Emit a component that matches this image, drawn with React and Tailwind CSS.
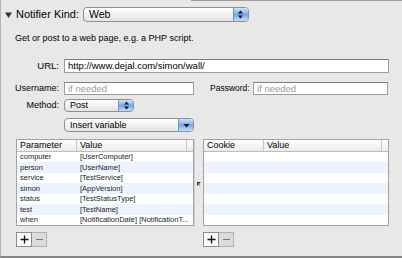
import React from "react";

const font = { fontFamily: '"Liberation Sans", Arial, sans-serif' };

const params = [
  ["computer", "[UserComputer]"],
  ["person", "[UserName]"],
  ["service", "[TestService]"],
  ["simon", "[AppVersion]"],
  ["status", "[TestStatusType]"],
  ["test", "[TestName]"],
  ["when", "[NotificationDate] [NotificationT..."],
];

const Arrows = ({ pulldown }) => (
  <span className="w-[15px] h-full flex items-center justify-center border-l border-[#6f93c4] bg-gradient-to-b from-[#d3e5fb] via-[#6ea8ee] to-[#c4defb]">
    {pulldown ? (
      <svg width="7" height="5" viewBox="0 0 7 5">
        <path d="M0.5 1h6L3.5 4.5z" fill="#111" />
      </svg>
    ) : (
      <svg width="5" height="9" viewBox="0 0 5 9">
        <path d="M2.5 0.5L5 3.5H0z" fill="#111" />
        <path d="M2.5 8.5L5 5.5H0z" fill="#111" />
      </svg>
    )}
  </span>
);

const Field = ({ value, placeholder, className }) => (
  <div className={`${className} bg-white border border-[#9c9c9c] border-t-[#7d7d7d] flex items-center pl-[3px] text-[9.5px] leading-none`}>
    {value ? <span className="text-black">{value}</span> : <span className="text-[#9a9a9a]">{placeholder}</span>}
  </div>
);

const Table = ({ width, col1, col1w, rows }) => (
  <div className={`${width} h-[87px] bg-white border border-[#a3a3a3] flex flex-col overflow-hidden`}>
    <div className="h-[12px] flex text-[9px] leading-none bg-gradient-to-b from-white to-[#ececec] border-b border-[#bdbdbd]">
      <div className={`${col1w} pl-[3px] flex items-center border-r border-[#c8c8c8]`}>{col1}</div>
      <div className="flex-1 pl-[3px] flex items-center border-r border-[#c8c8c8] mr-[6px]">Value</div>
    </div>
    {Array.from({ length: 7 }).map((_, i) => (
      <div key={i} className={`h-[10.5px] flex items-center text-[7.5px] leading-none text-[#1c1c1c] ${i % 2 ? "bg-[#edf3fe]" : "bg-white"}`}>
        {rows && rows[i] ? (
          <>
            <div className={`${col1w} pl-[3px] whitespace-nowrap`}>{rows[i][0]}</div>
            <div className="flex-1 pl-[3px] whitespace-nowrap">{rows[i][1]}</div>
          </>
        ) : null}
      </div>
    ))}
  </div>
);

const PlusMinus = () => (
  <div className="flex h-[15px] mt-[6px]">
    <div className="w-[16px] h-full bg-[#fafafa] border border-[#8c8c8c] flex items-center justify-center">
      <svg width="9" height="9" viewBox="0 0 9 9">
        <path d="M4.5 0.5v8M0.5 4.5h8" stroke="#111" strokeWidth="1.3" />
      </svg>
    </div>
    <div className="w-[15px] h-full bg-[#dcdcdc] border border-l-0 border-[#b0b0b0] flex items-center justify-center">
      <svg width="7" height="3" viewBox="0 0 7 3">
        <path d="M0 1.5h7" stroke="#777" strokeWidth="1" />
      </svg>
    </div>
  </div>
);

export default function App() {
  return (
    <div style={font} className="w-[402px] h-[258px] bg-[#e8e8e8] border-l border-[#b4b4b4] border-b-2 border-b-[#858585] flex flex-col overflow-hidden text-black">
      <div className="h-px ml-[190px] bg-[#9c9c9c]" />

      {/* Notifier kind */}
      <div className="flex items-center h-[15px] mt-[6px] pl-[4px]">
        <svg width="7" height="6" viewBox="0 0 7 6" className="mr-[4px]">
          <path d="M0 0.5h7L3.5 6z" fill="#333" />
        </svg>
        <span className="text-[11px] leading-none">Notifier Kind:</span>
        <div className="ml-[4px] w-[166px] h-full flex rounded-[4px] border border-[#8f8f8f] overflow-hidden bg-gradient-to-b from-white to-[#e4e4e4]">
          <span className="flex-1 pl-[5px] flex items-center text-[10.5px] font-medium leading-none">Web</span>
          <Arrows />
        </div>
      </div>

      <p className="text-[9px] leading-none mt-[12px] pl-[14px]">Get or post to a web page, e.g. a PHP script.</p>

      {/* URL */}
      <div className="flex items-center h-[14px] mt-[16px]">
        <span className="w-[58px] text-right text-[9.5px] leading-none">URL:</span>
        <Field className="ml-[5px] w-[325px] h-full" value="http://www.dejal.com/simon/wall/" />
      </div>

      {/* Username / password */}
      <div className="flex items-center h-[13px] mt-[9px]">
        <span className="w-[58px] text-right text-[9px] leading-none">Username:</span>
        <Field className="ml-[5px] w-[130px] h-full" placeholder="if needed" />
        <span className="ml-[16px] w-[42px] text-[8.5px] leading-none whitespace-nowrap">Password:</span>
        <Field className="ml-[1px] w-[135px] h-full" placeholder="if needed" />
      </div>

      {/* Method */}
      <div className="flex items-center h-[13px] mt-[4px]">
        <span className="w-[58px] text-right text-[9px] leading-none">Method:</span>
        <div className="ml-[5px] w-[70px] h-full flex rounded-[4px] border border-[#8f8f8f] overflow-hidden bg-gradient-to-b from-white to-[#e4e4e4]">
          <span className="flex-1 pl-[5px] flex items-center text-[9px] font-medium leading-none">Post</span>
          <Arrows />
        </div>
      </div>

      {/* Insert variable */}
      <div className="flex h-[14px] mt-[6px] pl-[63px]">
        <div className="w-[130px] h-full flex rounded-[4px] border border-[#8f8f8f] overflow-hidden bg-gradient-to-b from-white to-[#e4e4e4]">
          <span className="flex-1 pl-[5px] flex items-center text-[9px] font-medium leading-none">Insert variable</span>
          <Arrows pulldown />
        </div>
      </div>

      {/* Tables */}
      <div className="flex mt-[7px] pl-[15px]">
        <div className="flex flex-col">
          <Table width="w-[178px]" col1="Parameter" col1w="w-[60px]" rows={params} />
          <PlusMinus />
        </div>
        <div className="w-[9px] h-[87px] border-l border-[#d0d0d0] bg-[#e9e9e9] flex items-end justify-center pb-[40px]">
          <svg width="4" height="4" viewBox="0 0 4 4">
            <path d="M0 0h3v1H1v2H0z M1.5 2.5L3.5 4" fill="#333" stroke="#333" strokeWidth="0.8" />
          </svg>
        </div>
        <div className="flex flex-col">
          <Table width="w-[186px]" col1="Cookie" col1w="w-[60px]" />
          <PlusMinus />
        </div>
      </div>
    </div>
  );
}
